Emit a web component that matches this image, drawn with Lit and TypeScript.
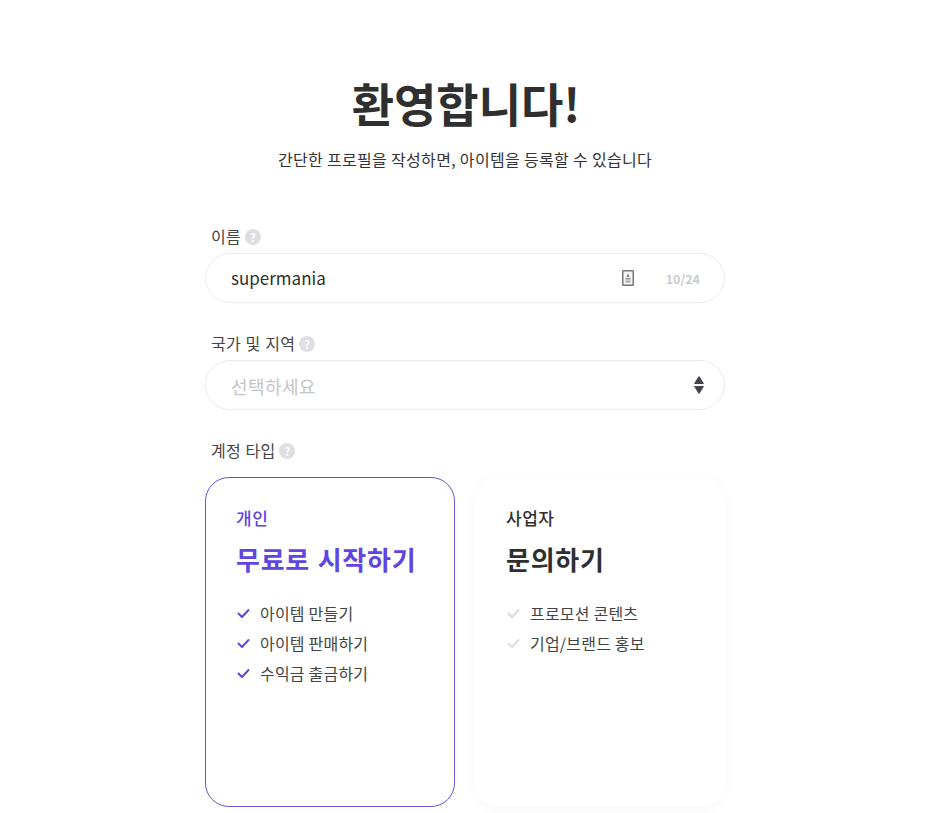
import { LitElement, css, html, svg } from 'lit';
import { customElement } from 'lit/decorators.js';

const check = svg`<path d="M1.5 5.5 L5 9 L11.5 2" fill="none" stroke="currentColor" stroke-width="2" stroke-linecap="round" stroke-linejoin="round"/>`;

type Plan = { kicker: string; title: string; items: string[]; active: boolean };

const plans: Plan[] = [
    { kicker: '개인', title: '무료로 시작하기', items: ['아이템 만들기', '아이템 판매하기', '수익금 출금하기'], active: true },
    { kicker: '사업자', title: '문의하기', items: ['프로모션 콘텐츠', '기업/브랜드 홍보'], active: false },
];

@customElement('app-root')
export class AppRoot extends LitElement {
    static styles = css`
        :host {
          display: block;
          height: 813px;
          overflow: hidden;
          background: #fff;
          color: #2f2f2f;
          font-family: "Noto Sans CJK KR", "Noto Sans", sans-serif;
        }

        .page {
          width: 520px;
          margin-left: 205px;
          padding-top: 68px;
        }

        h1 {
          margin: 0;
          padding-left: 2px;
          font-size: 46px;
          line-height: 68px;
          font-weight: 700;
          text-align: center;
        }

        .lead {
          margin: 12px 0 0;
          font-size: 16px;
          line-height: 22px;
          letter-spacing: 0.32px;
          text-align: center;
          color: #333;
        }

        .spacer { height: 55px; }

        .label {
          display: flex;
          align-items: center;
          gap: 4px;
          box-sizing: border-box;
          height: 24px;
          padding: 0 0 2px 6px;
          font-size: 16px;
          letter-spacing: 0.2px;
          word-spacing: 1px;
          color: #444;
        }

        .help {
          width: 16px;
          height: 16px;
          margin-top: 2px;
          border-radius: 50%;
          background: #dfdfe3;
          color: #fff;
          font-size: 11px;
          font-weight: 700;
          line-height: 16px;
          text-align: center;
        }

        .field {
          display: flex;
          align-items: center;
          box-sizing: border-box;
          height: 50px;
          margin-top: 4px;
          padding: 0 24px 0 25px;
          border: 1px solid #ebebeb;
          border-radius: 25px;
          font-size: 17px;
          line-height: 48px;
        }

        .name-field { margin-bottom: 29px; }
        .select-field { margin-bottom: 29px; }

        .value { flex: 1; }
        .placeholder {
          flex: 1;
          margin-top: 1px;
          font-size: 18px;
          letter-spacing: 0.4px;
          color: #c4c4c4;
        }

        .count {
          margin: 1px 0 0 32px;
          font-size: 12.5px;
          font-weight: 700;
          color: #c9ccd3;
        }

        .updown { margin-right: -4px; }

        .cards {
          display: flex;
          gap: 20px;
          margin-top: 14px;
        }

        .card {
          box-sizing: border-box;
          width: 250px;
          height: 330px;
          padding: 27px 30px;
          border: 1px solid transparent;
          border-radius: 24px;
          background: #fff;
          box-shadow: 0 2px 12px rgba(0, 0, 0, 0.04);
        }

        .card.active {
          border-color: #6a54d6;
          box-shadow: none;
          color: #5f45e2;
        }

        .kicker {
          font-size: 17px;
          line-height: 26px;
          letter-spacing: 0.5px;
          font-weight: 500;
        }

        .title {
          margin-top: 12px;
          font-size: 26px;
          line-height: 32px;
          letter-spacing: 0.75px;
          word-spacing: 1px;
          font-weight: 700;
          white-space: nowrap;
        }

        ul {
          list-style: none;
          margin: 23px 0 0;
          padding: 0;
        }

        li {
          display: flex;
          align-items: center;
          gap: 10px;
          height: 30px;
          font-size: 16px;
          letter-spacing: 0.2px;
          color: #444;
        }

        li svg {
          width: 13px;
          height: 11px;
          margin-left: 1px;
          color: #dcdcdc;
        }

        .active li svg { color: #5f45e2; }
    `;

    private help() {
        return html`<span class="help">?</span>`;
    }

    private renderPlan(plan: Plan) {
        return html`
            <div class="card ${plan.active ? 'active' : ''}">
                <div class="kicker">${plan.kicker}</div>
                <div class="title">${plan.title}</div>
                <ul>
                    ${plan.items.map((item) => html`<li><svg viewBox="0 0 13 11">${check}</svg>${item}</li>`)}
                </ul>
            </div>
        `;
    }

    render() {
        return html`
            <div class="page">
                <h1>환영합니다!</h1>
                <p class="lead">간단한 프로필을 작성하면, 아이템을 등록할 수 있습니다</p>

                <div class="spacer"></div>
                <div class="label">이름 ${this.help()}</div>
                <div class="field name-field">
                    <span class="value">supermania</span>
                    <svg width="12" height="16" viewBox="0 0 12 16">
                        <rect x="0.75" y="0.75" width="10.5" height="14.5" rx="0.5" fill="#f4f4f4" stroke="#777" stroke-width="1.5"/>
                        <path d="M6 3.5 L7.5 7 H4.5 Z" fill="#777"/>
                        <rect x="3.5" y="8" width="5" height="1.5" fill="#8a8a8a"/>
                        <rect x="3.5" y="10.5" width="5" height="2" fill="#a8a8a8"/>
                    </svg>
                    <span class="count">10/24</span>
                </div>

                <div class="label">국가 및 지역 ${this.help()}</div>
                <div class="field select-field">
                    <span class="placeholder">선택하세요</span>
                    <svg class="updown" width="10" height="18" viewBox="0 0 10 18">
                        <path d="M5 0.8 L9.2 7.5 H0.8 Z M0.8 10.5 H9.2 L5 17.2 Z" fill="#44444c" stroke="#44444c" stroke-width="1.2" stroke-linejoin="round"/>
                    </svg>
                </div>

                <div class="label">계정 타입 ${this.help()}</div>
                <div class="cards">${plans.map((plan) => this.renderPlan(plan))}</div>
            </div>
        `;
    }
}
